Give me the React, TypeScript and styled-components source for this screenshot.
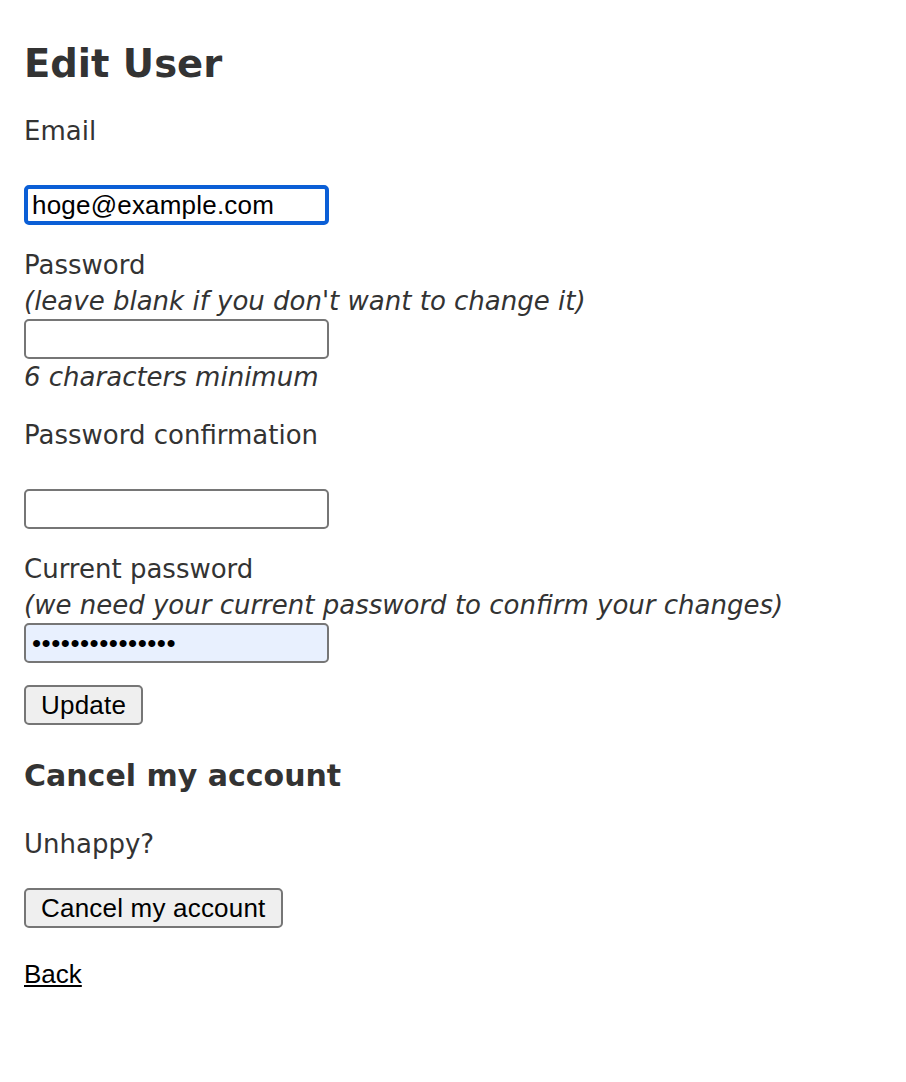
import React from "react";
import styled, { createGlobalStyle } from "styled-components";

const GlobalStyle = createGlobalStyle`
  html, body {
    margin: 0;
    background: #ffffff;
  }
`;

const Page = styled.div`
  padding: 40px 24px 60px;
  font-family: "DejaVu Sans", Verdana, sans-serif;
  font-size: 26px;
  line-height: 36px;
  color: #333333;
`;

const Title = styled.h2`
  margin: 0 0 25px;
  font-size: 38.5px;
  line-height: 48px;
  font-weight: bold;
`;

const Form = styled.form`
  display: flex;
  flex-direction: column;
  align-items: flex-start;
`;

const Field = styled.div`
  display: flex;
  flex-direction: column;
  align-items: flex-start;
  margin-bottom: 22px;
`;

const Label = styled.label`
  display: block;
  height: 36px;
`;

const Hint = styled.i`
  display: block;
  height: 36px;
  font-style: italic;
`;

const Input = styled.input<{ $focused?: boolean; $autofill?: boolean }>`
  box-sizing: border-box;
  width: 305px;
  height: 40px;
  margin: 0;
  padding: 0 ${({ $focused }) => ($focused ? "4px" : "6px")};
  border: ${({ $focused }) => ($focused ? "4px solid #0b5fd6" : "2px solid #767676")};
  border-radius: 5px;
  background: ${({ $autofill }) => ($autofill ? "#e8f0fe" : "#ffffff")};
  font-family: "Liberation Sans", Arial, sans-serif;
  font-size: 26px;
  color: #000000;
  outline: none;
  letter-spacing: ${({ type }) => (type === "password" ? "0.5px" : "0.2px")};
`;

const Button = styled.button`
  box-sizing: border-box;
  height: 40px;
  padding: 0 15px;
  margin: 0;
  border: 2px solid #767676;
  border-radius: 5px;
  background: #efefef;
  font-family: "Liberation Sans", Arial, sans-serif;
  font-size: 26px;
  letter-spacing: 0.2px;
  color: #000000;
  cursor: pointer;
`;

const SubTitle = styled.h3`
  margin: 33px 0 32px;
  font-size: 30px;
  line-height: 36px;
  font-weight: bold;
`;

const Text = styled.p`
  margin: 0 0 26px;
`;

const ButtonRow = styled.div`
  margin-bottom: 28px;
`;

const BackLink = styled.a`
  font-family: "Liberation Sans", Arial, sans-serif;
  font-size: 26px;
  line-height: 36px;
  color: #000000;
  text-decoration: underline;
`;

export default function App() {
  return (
    <>
      <GlobalStyle />
      <Page>
        <Title>Edit User</Title>
        <Form onSubmit={(e) => e.preventDefault()}>
          <Field>
            <Label>Email</Label>
            <Hint />
            <Input $focused type="email" defaultValue="hoge@example.com" />
          </Field>
          <Field>
            <Label>Password</Label>
            <Hint>(leave blank if you don't want to change it)</Hint>
            <Input type="password" />
            <Hint>6 characters minimum</Hint>
          </Field>
          <Field>
            <Label>Password confirmation</Label>
            <Hint />
            <Input type="password" />
          </Field>
          <Field>
            <Label>Current password</Label>
            <Hint>(we need your current password to confirm your changes)</Hint>
            <Input $autofill type="password" defaultValue="passwordpasswor" />
          </Field>
          <Button type="submit">Update</Button>
        </Form>
        <SubTitle>Cancel my account</SubTitle>
        <Text>Unhappy?</Text>
        <ButtonRow>
          <Button type="button">Cancel my account</Button>
        </ButtonRow>
        <BackLink href="#">Back</BackLink>
      </Page>
    </>
  );
}
